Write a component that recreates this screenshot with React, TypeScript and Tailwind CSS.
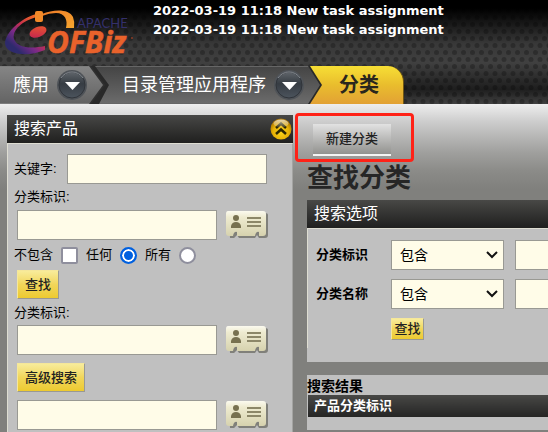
import { useId } from "react";
import type { ReactNode } from "react";

const notices = [
  "2022-03-19 11:18 New task assignment",
  "2022-03-19 11:18 New task assignment",
];

function Logo() {
  return (
    <svg className="block h-[66px] w-[140px]" viewBox="0 0 140 66" role="img" aria-label="Apache OFBiz">
      <defs>
        <linearGradient id="swoosh" gradientUnits="userSpaceOnUse" x1="60" y1="10" x2="22" y2="54">
          <stop offset="0" stopColor="#f39a2d" />
          <stop offset="0.4" stopColor="#ec6428" />
          <stop offset="0.62" stopColor="#c8304c" />
          <stop offset="0.8" stopColor="#7c2a88" />
          <stop offset="1" stopColor="#2e2a6c" />
        </linearGradient>
        <linearGradient id="arch" x1="0" y1="0" x2="1" y2="1">
          <stop offset="0" stopColor="#ee7a28" />
          <stop offset="1" stopColor="#f7a72f" />
        </linearGradient>
        <linearGradient id="head" x1="0" y1="1" x2="1" y2="0">
          <stop offset="0" stopColor="#bd2054" />
          <stop offset="1" stopColor="#ee5a2a" />
        </linearGradient>
      </defs>
      <path
        d="M36 14C20 19 6 32 5 43C5 54 26 58 45 50V46C31 49 17 48 14 39C12 30 22 21 37 17Z"
        fill="url(#swoosh)"
      />
      <path d="M42 14C54 9 69 9 73 17Q75 22 74 28H66C68 20 65 13 56 13Q49 13 42 16Z" fill="url(#arch)" />
      <rect x="35" y="11" width="8" height="11" rx="2" fill="#f28a29" />
      <ellipse cx="38" cy="32" rx="9" ry="5" transform="rotate(-22 38 32)" fill="url(#head)" />
      <text x="77" y="28" fontFamily="Lato, sans-serif" fontSize="13" fill="#34306b">APACHE</text>
      <text x="47" y="53" fontFamily="'Open Sans', sans-serif" fontSize="30" fontWeight="700" fontStyle="italic" fill="#e9622b" stroke="#e9622b" strokeWidth="0.500">OFBiz</text>
      <circle cx="132" cy="38" r="1" fill="#8d3d25" />
    </svg>
  );
}

function Mesh() {
  return (
    <svg className="absolute inset-0 h-full w-full" aria-hidden="true">
      <defs>
        <pattern id="mesh" width="9" height="14" patternUnits="userSpaceOnUse">
          <circle cx="0" cy="3.500" r="2.500" fill="#000" fillOpacity="0.25" />
          <circle cx="9" cy="3.500" r="2.500" fill="#000" fillOpacity="0.25" />
          <circle cx="4.500" cy="10.500" r="2.500" fill="#000" fillOpacity="0.25" />
        </pattern>
      </defs>
      <rect width="100%" height="100%" fill="url(#mesh)" />
    </svg>
  );
}

function MenuArrow({ label }: { label: string }) {
  const id = useId();
  return (
    <button type="button" aria-label={label} className="size-8 shrink-0">
      <svg viewBox="0 0 32 32" className="block size-8">
        <defs>
          <linearGradient id={id} x1="0" y1="0" x2="0" y2="1">
            <stop offset="0" stopColor="#60656b" />
            <stop offset="0.45" stopColor="#363c43" />
            <stop offset="1" stopColor="#4c545d" />
          </linearGradient>
        </defs>
        <circle cx="16" cy="16" r="15" fill="#4f5358" />
        <circle cx="16" cy="16" r="13" fill={`url(#${id})`} stroke="#30343a" />
        <path d="M5 9A13 13 0 0 1 27 9" stroke="#858a90" strokeWidth="1" fill="none" />
        <path d="M9 13H24L16.500 21Z" fill="#fff" />
      </svg>
    </button>
  );
}

function PanelTitle({ children, action }: { children: ReactNode; action?: ReactNode }) {
  return (
    <div className="flex h-7 items-center justify-between bg-linear-to-b from-[#484846] to-[#20201f] pl-[7px] text-white">
      <h2 className="text-base leading-7">{children}</h2>
      {action}
    </div>
  );
}

function CollapseButton() {
  return (
    <button type="button" aria-label="折叠" className="mr-px size-[22px]">
      <svg viewBox="0 0 22 22" className="block size-[22px]">
        <defs>
          <radialGradient id="gold" cx="0.5" cy="0.65" r="0.6">
            <stop offset="0" stopColor="#fbd51b" />
            <stop offset="0.65" stopColor="#e5af05" />
            <stop offset="1" stopColor="#a87300" />
          </radialGradient>
          <linearGradient id="shine" x1="0" y1="0" x2="0" y2="1">
            <stop offset="0" stopColor="#fff" stopOpacity="0.7" />
            <stop offset="1" stopColor="#fff" stopOpacity="0.1" />
          </linearGradient>
        </defs>
        <circle cx="11" cy="11" r="10.5" fill="url(#gold)" />
        <path d="M6 10L11 5.500L16 10M6 16L11 11.500L16 16" stroke="#2c2600" strokeWidth="2.500" fill="none" />
        <ellipse cx="11" cy="5.500" rx="7.500" ry="4" fill="url(#shine)" />
      </svg>
    </button>
  );
}

function LookupButton() {
  const id = useId();
  return (
    <button type="button" aria-label="查找记录" className="shrink-0">
      <svg viewBox="0 0 44 30" className="block h-[30px] w-11">
        <defs>
          <linearGradient id={id} x1="0" y1="0" x2="0" y2="1">
            <stop offset="0" stopColor="#fbfaef" />
            <stop offset="0.25" stopColor="#eeebd0" />
            <stop offset="1" stopColor="#d6d2ae" />
          </linearGradient>
        </defs>
        <path d="M4 3H40Q43 3 43 5V25Q43 28 40 28H34L32 25L30 28H14L12 25L9 28H5Z" fill="#6f6f68" fillOpacity="0.8" />
        <path
          d="M3 1H38Q41 1 41 4V23Q41 26 38 26H34V22Q31 21 30 26H12V22Q9 21 8 26H4Q1 26 1 23V4Q1 1 3 1Z"
          fill={`url(#${id})`}
        />
        <circle cx="11" cy="8" r="3" fill="#777150" />
        <path d="M6 18V16Q7 12 11 12Q15 12 16 16V18Z" fill="#777150" />
        <path d="M22 8H36M22 12H36M22 16H36" stroke="#8c8768" strokeWidth="2" />
      </svg>
    </button>
  );
}

const field = "h-[30px] border border-[#999993] bg-[#fffce8] px-2";
const goldButton =
  "border border-t-[#f5e79a] border-l-[#f5e79a] border-r-[#999993] border-b-[#999993] bg-linear-to-b from-[#f8ec9a] via-[#f1d659] to-[#edca2e] text-[#222] font-medium";

function LookupField({ id }: { id?: string }) {
  return (
    <div className="ml-[3px] flex h-[30px] items-center gap-2">
      <input id={id} aria-label={id ? undefined : "高级搜索"} type="text" className={`${field} w-[200px]`} />
      <LookupButton />
    </div>
  );
}

function ProductSearch() {
  const round =
    "size-[17px] appearance-none rounded-full border-2 border-[#8f8f9d] bg-white checked:border-[#0060df] checked:bg-[#0060df] checked:shadow-[inset_0_0_0_2px_#fff]";
  return (
    <section className="w-[286px] shrink-0">
      <PanelTitle action={<CollapseButton />}>搜索产品</PanelTitle>
      <form className="min-h-[calc(100vh-143px)] border-t border-r border-l border-t-[#deddd2] border-r-[#a4a4a2] border-l-[#deddd2] bg-[#c0c0c0] px-1.5 pt-[10px]">
        <div className="flex h-[30px] items-center gap-2">
          <label htmlFor="keyword" className="w-[45px] whitespace-nowrap">关键字:</label>
          <input id="keyword" type="text" className={`${field} w-[200px]`} />
        </div>
        <label htmlFor="category" className="block h-[26px] leading-[26px]">分类标识:</label>
        <LookupField id="category" />
        <div className="flex h-[30px] items-center gap-2">
          <label htmlFor="exclude">不包含</label>
          <input
            id="exclude"
            type="checkbox"
            className="size-[17px] appearance-none rounded-xs border-2 border-[#8f8f9d] bg-white checked:bg-[#0060df]"
          />
          <label htmlFor="any">任何</label>
          <input id="any" name="match" type="radio" defaultChecked className={round} />
          <label htmlFor="all">所有</label>
          <input id="all" name="match" type="radio" className={round} />
        </div>
        <button type="submit" className={`${goldButton} ml-[3px] block h-[29px] px-[7px]`}>查找</button>
        <label htmlFor="advanced" className="block h-[26px] leading-[28px]">分类标识:</label>
        <LookupField id="advanced" />
        <button type="button" className={`${goldButton} my-2 ml-[3px] block h-[29px] px-[7px]`}>高级搜索</button>
        <LookupField />
      </form>
    </section>
  );
}

function CriteriaRow({ id, label }: { id: string; label: string }) {
  return (
    <div className="flex h-[30px] items-center">
      <label htmlFor={id} className="w-[75px] shrink-0 font-bold">{label}</label>
      <div className="relative mr-[11px] shrink-0">
        <select id={id} className={`${field} block w-[113px] appearance-none text-sm`}>
          <option>包含</option>
          <option>等于</option>
        </select>
        <svg viewBox="0 0 12 8" className="pointer-events-none absolute top-[11px] right-[6px] h-2 w-3" aria-hidden="true">
          <path d="M1 1L6 6L11 1" stroke="#111" strokeWidth="2" fill="none" />
        </svg>
      </div>
      <input type="text" aria-label={label} className={`${field} w-[200px] shrink-0`} />
    </div>
  );
}

export default function App() {
  return (
    <div className="h-screen overflow-hidden bg-[#80807d] font-['Liberation_Sans','Noto_Sans_CJK_SC',sans-serif] text-[13px] text-black">
      <header className="relative bg-[linear-gradient(#000000_8%,#383838_42%,#404040_60%,#1e1e1e_86%,#404040)]">
        <Mesh />
        <div className="relative flex h-[66px]">
          <div className="w-[153px] shrink-0">
            <Logo />
          </div>
          <ul className="pt-px font-['DejaVu_Sans',sans-serif] leading-[19px] font-bold whitespace-nowrap text-white">
            {notices.map((notice, i) => (
              <li key={i}>{notice}</li>
            ))}
          </ul>
        </div>
        <nav className="relative">
          <ul className="flex h-[38px] text-lg whitespace-nowrap text-white">
            <li className="z-20 w-[105px] bg-[#303030] [clip-path:polygon(0_0,calc(100%-14px)_0,100%_50%,calc(100%-14px)_100%,0_100%)]">
              <div className="mr-[2px] flex h-full items-center gap-[7px] border-y border-[#7d7d7d] bg-linear-to-b from-[#858585] to-[#646464] pl-[13px] [clip-path:polygon(0_0,calc(100%-14px)_0,100%_50%,calc(100%-14px)_100%,0_100%)]">
                <a href="#apps">應用</a>
                <MenuArrow label="應用菜单" />
              </div>
            </li>
            <li className="z-10 -ml-[14px] w-[231px] bg-[#292929] [clip-path:polygon(0_0,calc(100%-12px)_0,100%_50%,calc(100%-12px)_100%,0_100%)]">
              <div className="mr-[2px] flex h-full items-center gap-[7px] border-y border-[#666] bg-linear-to-b from-[#454545] to-[#6b6b6b] pl-[31px] [clip-path:polygon(4px_0,calc(100%-12px)_0,100%_50%,calc(100%-12px)_100%,8px_100%,18px_50%)]">
                <a href="#catalog">目录管理应用程序</a>
                <MenuArrow label="目录菜单" />
              </div>
            </li>
            <li className="-ml-[12px] w-[94px] rounded-tr-[16px] border-r border-[#715711] bg-linear-to-b from-[#f7df35] via-[#e9bd2d] to-[#e2a134]">
              <a href="#category" className="block pl-[29px] text-xl leading-[38px] font-bold text-[#29261d]">分类</a>
            </li>
          </ul>
        </nav>
      </header>
      <main className="flex gap-[14px] bg-[linear-gradient(#eeeeee_0px,#cccccc_18px,#a0a09e_48px,#8b8b88_67px,#80807d_85px)] pt-[11px] pl-[7px]">
        <ProductSearch />
        <div className="min-w-0 flex-1 overflow-visible">
          <div className="relative ml-1.5 mt-[9px] w-fit">
            <button
              type="button"
              className="block h-8 w-[78px] border-b-2 border-[#f4f4f4] bg-linear-to-b from-[#e2e2e2] to-[#92928f] font-medium text-[#222]"
            >
              新建分类
            </button>
            <div className="pointer-events-none absolute -top-[11px] -right-[23px] -bottom-[6px] -left-[18px] rounded-sm border-3 border-[#ff2217]" />
          </div>
          <h1 className="h-11 text-[26px] leading-[44px] font-bold text-[#262626]">查找分类</h1>
          <section className="h-[162px] bg-[#c0c0c0]">
            <PanelTitle>搜索选项</PanelTitle>
            <form className="flex flex-col gap-[9px] border-t border-l border-[#deddd2] pt-[11px] pb-2 pl-2">
              <CriteriaRow id="category-id" label="分类标识" />
              <CriteriaRow id="category-name" label="分类名称" />
              <button type="submit" className={`${goldButton} ml-[75px] h-[22px] w-[33px]`}>查找</button>
            </form>
          </section>
          <section className="mt-[13px] bg-[#c0c0c0] pb-[13px]">
            <h2 className="h-5 text-sm leading-[22px] font-bold">搜索结果</h2>
            <table className="w-full">
              <thead>
                <tr>
                  <th className="h-[22px] border-l border-[#c0c0c0] bg-linear-to-b from-[#484846] to-[#252524] pl-1.5 text-left leading-[22px] text-white">
                    产品分类标识
                  </th>
                </tr>
              </thead>
            </table>
          </section>
        </div>
      </main>
    </div>
  );
}
